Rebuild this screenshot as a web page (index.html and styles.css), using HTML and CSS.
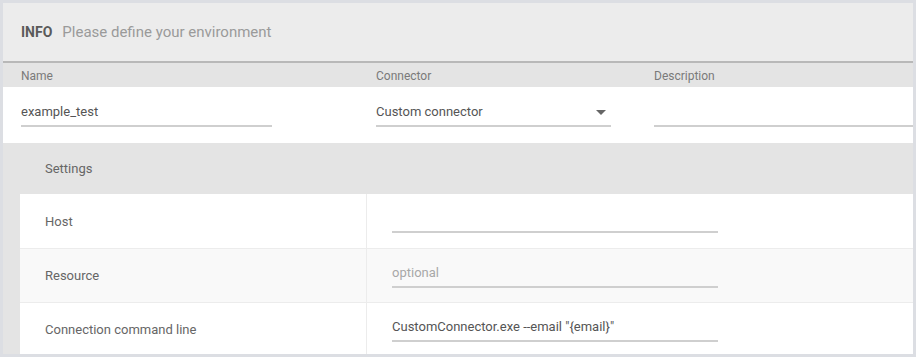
FILE: index.html
```html
<!DOCTYPE html>
<html lang="en">
<head>
  <meta charset="UTF-8">
  <title>Environment</title>
  <link rel="stylesheet" href="styles.css">
</head>
<body>
  <div class="frame">
    <div class="panel">
      <div class="header">
        <span class="header-title">INFO</span>
        <span class="header-sub">Please define your environment</span>
      </div>

      <div class="fields">
        <div class="field-label">Name</div>
        <div class="field-label">Connector</div>
        <div class="field-label">Description</div>

        <div class="field-cell">
          <div class="input input-name">example_test</div>
        </div>
        <div class="field-cell">
          <div class="input input-select">
            <span>Custom connector</span>
            <span class="caret"></span>
          </div>
        </div>
        <div class="field-cell">
          <div class="input input-desc"></div>
        </div>
      </div>

      <div class="settings">
        <div class="settings-title">Settings</div>
        <div class="settings-table">
          <div class="row">
            <div class="row-label">Host</div>
            <div class="row-value"><div class="input input-setting"></div></div>
          </div>
          <div class="row row-alt">
            <div class="row-label">Resource</div>
            <div class="row-value"><div class="input input-setting placeholder">optional</div></div>
          </div>
          <div class="row">
            <div class="row-label">Connection command line</div>
            <div class="row-value"><div class="input input-setting">CustomConnector.exe --email "{email}"</div></div>
          </div>
        </div>
      </div>
    </div>
  </div>
</body>
</html>
```

FILE: styles.css
```css
html, body { margin: 0; padding: 0; }
body { font-family: Roboto, "Liberation Sans", sans-serif; color: #555; background: #dcdee3; }

.frame { box-sizing: border-box; width: 916px; height: 357px; padding: 3px; background: #dcdee3; }
.panel { height: 351px; overflow: hidden; background: #fff; }

.header { height: 60px; display: flex; align-items: center; padding-left: 18px; box-sizing: border-box; background: #ececec; border-bottom: 2px solid #b8b8b8; font-size: 15px; }
.header-title { font-weight: bold; font-size: 14px; color: #5a5a5a; margin-right: 10px; }
.header-sub { color: #9a9a9a; }

.fields { display: grid; grid-template-columns: 355px 278px 1fr; grid-template-rows: 24px 56px; padding-left: 18px; background: linear-gradient(#e4e4e4 0 24px, #fff 24px); }
.field-label { font-size: 12px; color: #7a7a7a; display: flex; align-items: center; padding-top: 1px; }
.field-cell { padding-top: 10px; }

.input { box-sizing: border-box; height: 30px; padding-top: 7px; border-bottom: 2px solid #cfcfcf; font-size: 13px; color: #555; }
.input-name { width: 251px; }
.input-select { width: 235px; display: flex; justify-content: space-between; }
.input-desc { width: 100%; }
.caret { width: 0; height: 0; margin: 6px 5px 0 0; border-left: 5px solid transparent; border-right: 5px solid transparent; border-top: 5px solid #666; }

.settings { background: #e4e4e4; padding-left: 17px; }
.settings-title { height: 51px; padding-left: 25px; display: flex; align-items: center; font-size: 13px; color: #666; }
.settings-table { background: #fff; }
.row { display: flex; height: 54px; border-top: 1px solid #ececec; box-sizing: border-box; }
.row:first-child { border-top: none; }
.row-alt { background: #f9f9f9; }
.row-label { width: 347px; padding-left: 25px; box-sizing: border-box; border-right: 1px solid #ececec; display: flex; align-items: center; font-size: 13px; color: #666; }
.row-value { padding: 9px 0 0 25px; }
.input-setting { width: 326px; }
.placeholder { color: #a8a8a8; }
```
